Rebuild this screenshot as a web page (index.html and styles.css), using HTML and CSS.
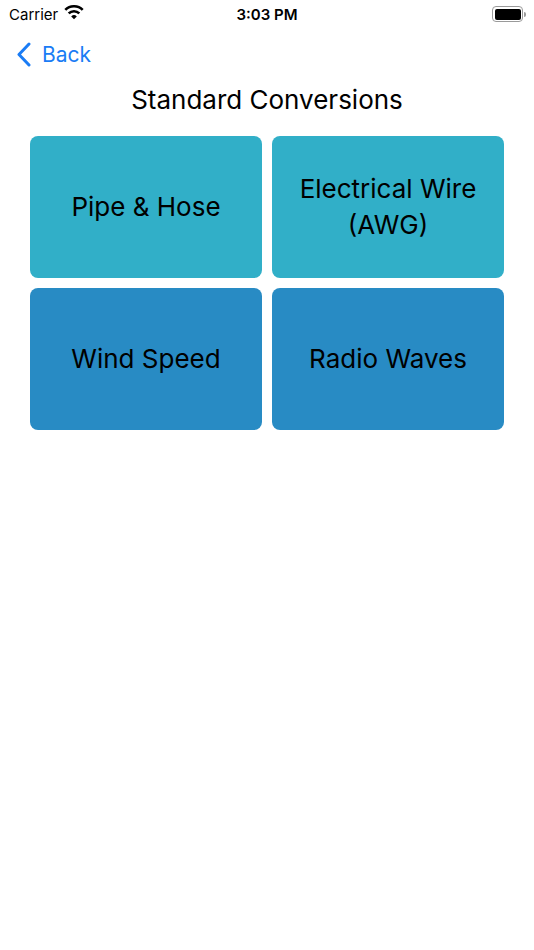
FILE: index.html
```html
<!DOCTYPE html>
<html lang="en">
  <head>
    <meta charset="UTF-8" />
    <meta name="viewport" content="width=device-width, initial-scale=1.0" />
    <title>Standard Conversions</title>
    <link rel="stylesheet" href="styles.css">
  </head>
  <body>
    <div class="status-bar">
      <div class="carrier">
        Carrier
        <svg class="wifi" width="20" height="15" viewBox="0 0 20 15">
          <path d="M1.3 4.9 A12.3 12.3 0 0 1 18.7 4.9" fill="none" stroke="#000" stroke-width="2.6"/>
          <path d="M4.7 8.4 A7.5 7.5 0 0 1 15.3 8.4" fill="none" stroke="#000" stroke-width="2.6"/>
          <path d="M10 14.2 L7.2 11.4 A4 4 0 0 1 12.8 11.4 Z" fill="#000"/>
        </svg>
      </div>
      <div class="time">3:03 PM</div>
      <div class="battery">
        <div class="battery-body"><div class="battery-level"></div></div>
        <div class="battery-tip"></div>
      </div>
    </div>

    <div class="nav">
      <a class="back" href="#">
        <svg width="15" height="25" viewBox="0 0 15 25">
          <path d="M13 2 L3 12.5 L13 23" fill="none" stroke="#1a7cf5" stroke-width="3" stroke-linecap="round" stroke-linejoin="round"/>
        </svg>
        <span>Back</span>
      </a>
    </div>

    <h1 class="title">Standard Conversions</h1>

    <div class="grid">
      <div class="tile teal">Pipe &amp; Hose</div>
      <div class="tile teal">Electrical Wire<br>(AWG)</div>
      <div class="tile blue">Wind Speed</div>
      <div class="tile blue">Radio Waves</div>
    </div>
  </body>
</html>
```

FILE: styles.css
```css
body {
  font-family: Inter, "Noto Sans", sans-serif;
  background-color: #fff;
  color: #000;
  margin: 0;
  width: 534px;
  height: 950px;
}

.status-bar {
  height: 28px;
  display: flex;
  align-items: center;
  justify-content: space-between;
  padding: 0 8px 0 9px;
  font-size: 15px;
  position: relative;
}

.carrier {
  display: flex;
  align-items: center;
  gap: 6px;
}

.wifi {
  margin-top: -3px;
}

.time {
  font-weight: 600;
  position: absolute;
  left: 0;
  right: 0;
  text-align: center;
  pointer-events: none;
}

.battery {
  display: flex;
  align-items: center;
}

.battery-body {
  width: 26px;
  height: 11px;
  border: 1px solid #9a9a9a;
  border-radius: 4px;
  padding: 1.5px;
}

.battery-level {
  width: 100%;
  height: 100%;
  background: #000;
  border-radius: 2px;
}

.battery-tip {
  width: 2px;
  height: 5px;
  background: #9a9a9a;
  border-radius: 0 2px 2px 0;
  margin-left: 1px;
}

.nav {
  height: 52px;
  display: flex;
  align-items: center;
  padding-left: 16px;
}

.back {
  display: flex;
  align-items: center;
  gap: 11px;
  color: #1a7cf5;
  text-decoration: none;
  font-size: 21px;
}

.title {
  font-size: 26px;
  font-weight: 400;
  text-align: center;
  margin: 0;
  line-height: 40px;
}

.grid {
  display: grid;
  grid-template-columns: 1fr 1fr;
  gap: 10px 10px;
  padding: 0 30px;
  margin-top: 16px;
}

.tile {
  height: 142px;
  border-radius: 8px;
  display: flex;
  align-items: center;
  justify-content: center;
  text-align: center;
  font-size: 26px;
  line-height: 36px;
}

.teal {
  background-color: #31afc8;
}

.blue {
  background-color: #288bc4;
}
```
